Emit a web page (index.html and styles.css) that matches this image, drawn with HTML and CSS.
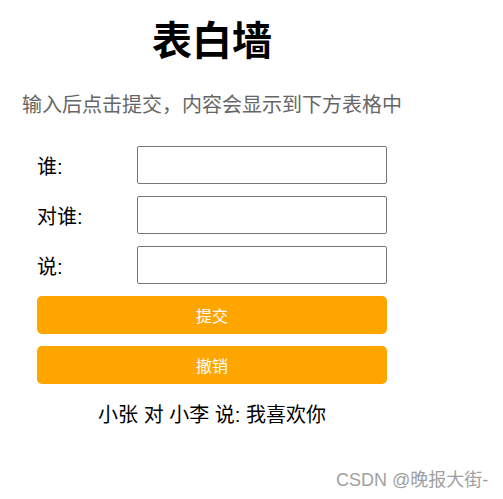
FILE: index.html
```html
<!DOCTYPE html>
<html lang="zh-CN">
<head>
<meta charset="utf-8">
<title>表白墙</title>
<link rel="stylesheet" href="styles.css">
</head>
<body>
<div class="container">
  <h1 class="title">表白墙</h1>
  <p class="tip">输入后点击提交，内容会显示到下方表格中</p>
  <div class="row">
    <span class="label">谁:</span>
    <input class="field" type="text">
  </div>
  <div class="row">
    <span class="label">对谁:</span>
    <input class="field" type="text">
  </div>
  <div class="row">
    <span class="label">说:</span>
    <input class="field" type="text">
  </div>
  <div class="row">
    <button class="btn">提交</button>
  </div>
  <div class="row">
    <button class="btn">撤销</button>
  </div>
  <div class="msg">小张 对 小李 说: 我喜欢你</div>
</div>
<div class="watermark">CSDN @晚报大街-</div>
</body>
</html>
```
FILE: styles.css
```css
* {
  box-sizing: border-box;
}
body {
  margin: 0;
  font-family: "Liberation Sans", "Noto Sans CJK SC", sans-serif;
  color: #000;
  background: #fff;
}
.container {
  width: 400px;
  margin-left: 12px;
  display: flex;
  flex-direction: column;
  align-items: center;
}
.title {
  margin: 17px 0 0;
  font-size: 40px;
  line-height: 48px;
  font-weight: bold;
  text-align: center;
}
.tip {
  margin: 24px 0 0;
  font-size: 20px;
  line-height: 30px;
  color: #666;
  text-align: center;
  white-space: nowrap;
  font-family: "Noto Sans CJK SC", sans-serif;
}
.row {
  width: 350px;
  height: 38px;
  margin-top: 12px;
  display: flex;
  align-items: center;
}
.tip + .row {
  margin-top: 27px;
}
.label {
  width: 100px;
  font-size: 20px;
}
.field {
  width: 250px;
  height: 38px;
  margin: 0;
  border: 1px solid #767676;
  border-radius: 2px;
  padding: 0 4px;
  font-size: 16px;
}
.btn {
  width: 350px;
  height: 38px;
  margin: 0;
  border: none;
  border-radius: 5px;
  background: #ffa500;
  color: #fff;
  font-family: "Noto Sans CJK SC", sans-serif;
  font-size: 16px;
}
.msg {
  margin-top: 16px;
  font-size: 20px;
  line-height: 30px;
  text-align: center;
}
.watermark {
  position: absolute;
  left: 336px;
  top: 468px;
  font-size: 18px;
  line-height: 24px;
  color: #a0a0a0;
  font-family: "Liberation Sans", "Noto Sans CJK SC", sans-serif;
}
```
